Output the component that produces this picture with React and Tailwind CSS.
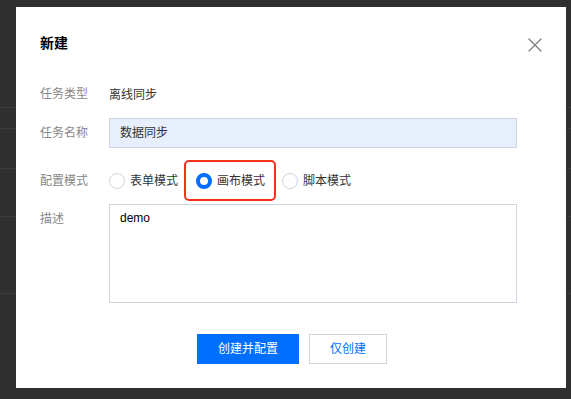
import { X } from 'lucide-react'

const font = "font-['Liberation_Sans','Noto_Sans_CJK_SC',sans-serif]"

function Radio({ checked, label }) {
  return (
    <label className="flex items-center gap-[5px] text-[12px] text-[#333]">
      {checked ? (
        <span className="w-4 h-4 rounded-full border-[4px] border-[#006eff] bg-white" />
      ) : (
        <span className="w-4 h-4 rounded-full border border-[#cfd5de] bg-white" />
      )}
      <span>{label}</span>
    </label>
  )
}

function Row({ label, children, className = '', labelClass = '' }) {
  return (
    <div className={`flex ${className}`}>
      <div className={`w-[69px] shrink-0 text-[12px] text-[#888] ${labelClass}`}>{label}</div>
      <div className="flex-1">{children}</div>
    </div>
  )
}

export default function App() {
  return (
    <div className={`relative w-[571px] h-[399px] overflow-hidden bg-[#2f2f2f] ${font}`}>
      {/* background page behind the mask */}
      <div className="flex flex-col">
        <div className="h-[108px] border-b border-[#3b3b3b]" />
        <div className="h-[21px] border-b border-[#3b3b3b]" />
        <div className="h-[40px] border-b border-[#3b3b3b]" />
        <div className="h-[48px] border-b border-[#3b3b3b]" />
        <div className="h-[77px] border-b border-[#3b3b3b]" />
      </div>

      {/* dialog */}
      <div className="absolute left-4 top-[7px] w-[550px] h-[381px] bg-white flex flex-col px-6">
        <div className="flex items-start justify-between pt-[24px]">
          <h2 className="mt-[3px] text-[14px] font-bold text-[#000] leading-[18px]">新建</h2>
          <X className="mt-[2px] w-6 h-6 text-[#888] mr-[-5px]" strokeWidth={1.5} />
        </div>

        <div className="flex flex-col mt-[28px] pr-[25px]">
          <Row label="任务类型" className="items-center h-[18px]">
            <span className="text-[12px] text-[#333]">离线同步</span>
          </Row>

          <Row label="任务名称" className="items-center mt-[15px]">
            <div className="h-[30px] bg-[#e8effc] border border-[#cfd5de] flex items-center px-[10px] text-[12px] text-[#333]">
              数据同步
            </div>
          </Row>

          <Row label="配置模式" className="items-center mt-[12px]">
            <div className="flex items-center">
              <Radio label="表单模式" />
              <div className="ml-[6px] h-[41px] w-[92px] border-[2px] border-[#f5301b] rounded-[5px] flex items-center pl-[10px]">
                <Radio checked label="画布模式" />
              </div>
              <div className="ml-[6px]">
                <Radio label="脚本模式" />
              </div>
            </div>
          </Row>

          <Row label="描述" className="mt-[3px]" labelClass="pt-[6px]">
            <div className="h-[99px] border border-[#cfd5de] px-[10px] pt-[4px] text-[12px] text-[#000]">
              demo
            </div>
          </Row>
        </div>

        <div className="flex justify-center gap-[10px] mt-[31px] pl-[2px]">
          <button className="w-[102px] h-[30px] bg-[#006eff] text-white text-[12px]">创建并配置</button>
          <button className="w-[78px] h-[30px] border border-[#cfd5de] text-[#006eff] text-[12px] bg-white">仅创建</button>
        </div>
      </div>
    </div>
  )
}
